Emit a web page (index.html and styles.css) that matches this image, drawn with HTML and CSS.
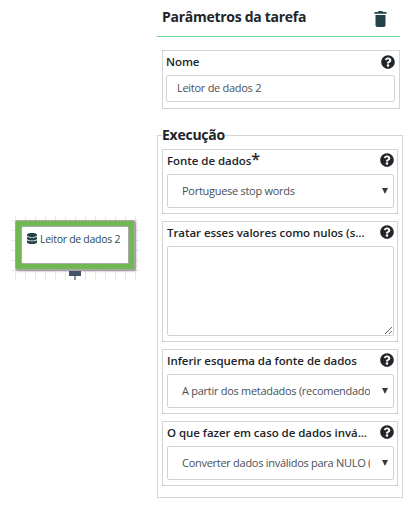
FILE: index.html
```html
<!DOCTYPE html>
<html lang="pt">
<head>
<meta charset="utf-8">
<title>Parâmetros da tarefa</title>
<link rel="stylesheet" href="styles.css">
</head>
<body>
<svg width="0" height="0" class="defs"><defs>
<symbol id="help" viewBox="0 0 512 512"><path fill="currentColor" d="M504 256c0 137-111 248-248 248S8 393 8 256 119 8 256 8s248 111 248 248zM262.700 90c-54.500 0-89.300 23-116.500 63.800-3.500 5.300-2.400 12.400 2.700 16.300l34.700 26.300c5.200 3.900 12.600 3 16.700-2.100 17.900-22.700 30.100-35.800 57.300-35.800 20.400 0 45.700 13.100 45.700 33 0 15-12.400 22.700-32.500 34C247.100 238.500 216 254.900 216 296v4c0 6.600 5.400 12 12 12h56c6.600 0 12-5.400 12-12v-1.300c0-28.500 83.200-29.600 83.200-106.700 0-58-60.200-102-116.500-102zM256 338c-25.400 0-46 20.600-46 46s20.600 46 46 46 46-20.600 46-46-20.600-46-46-46z"/></symbol>
</defs></svg>
<div class="app">
  <div class="canvas">
    <div class="node"><div class="node-body">
      <svg class="db" viewBox="0 0 448 512" preserveAspectRatio="none"><path fill="currentColor" d="M448 73v46c0 40-100 73-224 73S0 159 0 119V73C0 33 100 0 224 0s224 33 224 73zm0 103v103c0 40-100 73-224 73S0 319 0 279V176c48 33 136 48 224 48s176-15 224-48zm0 160v103c0 40-100 73-224 73S0 479 0 439V336c48 33 136 48 224 48s176-15 224-48z"/></svg>
      <span>Leitor de dados 2</span>
    </div></div>
    <div class="port"></div>
  </div>
  <div class="panel">
    <header><h1>Parâmetros da tarefa</h1>
      <svg class="trash" viewBox="0 0 12 16"><path fill="currentColor" d="M0 1h3.500l.7-1h3.600l.7 1H12v1.800H0zM1 4h10v10.300Q11 16 9.300 16H2.700Q1 16 1 14.300z"/></svg>
    </header>
    <div class="group name"><div class="label"><b>Nome</b><svg><use href="#help"/></svg></div><div class="field input">Leitor de dados 2</div></div>
    <fieldset>
      <legend>Execução</legend>
      <div class="group"><div class="label"><b>Fonte de dados<i>*</i></b><svg><use href="#help"/></svg></div><div class="field select"><span>Portuguese stop words</span></div></div>
      <div class="group"><div class="label"><b>Tratar esses valores como nulos (s...</b><svg><use href="#help"/></svg></div><textarea class="field"></textarea></div>
      <div class="group"><div class="label"><b>Inferir esquema da fonte de dados</b><svg><use href="#help"/></svg></div><div class="field select"><span>A partir dos metadados (recomendado</span></div></div>
      <div class="group"><div class="label"><b>O que fazer em caso de dados invá...</b><svg><use href="#help"/></svg></div><div class="field select"><span>Converter dados inválidos para NULO (</span></div></div>
    </fieldset>
  </div>
</div>
</body>
</html>
```
FILE: styles.css
```css
* { box-sizing: border-box; }
body { margin: 0; background: #fff; font: 11px/16px "Open Sans", "Noto Sans", sans-serif; color: #212529; overflow: hidden; }
.defs { position: absolute; }
.app { display: flex; height: 508px; }
.canvas { width: 128px; height: 64px; margin: 216px 18px 0 11px; padding: 4px 4px 0;
  background-image: linear-gradient(90deg, #e8e8e8 1px, transparent 1px), linear-gradient(#e8e8e8 1px, transparent 1px);
  background-size: 10px 10px; background-position: 4px 4px; }
.node { width: 120px; height: 50px; padding: 6px; background: #71b852; border: 1px solid #aaa; border-radius: 2px; box-shadow: 1px 1px 2px #888; }
.node-body { display: flex; height: 38px; margin: -1px 0 0 -1px; width: 108px; padding: 4px 0 0 5px; gap: 3px; background: #fff; border: 1px solid #aaa; border-radius: 2px; color: #2b4b52; font-size: 10.500px; letter-spacing: -0.28px; white-space: nowrap; }
.db { width: 10px; height: 11px; margin-top: 2px; color: #23424a; }
.port { width: 12px; height: 5px; margin: 1px 0 0 54px; background: #445468; }
.port::after { content: ""; display: block; width: 2px; height: 4px; margin-left: 5px; transform: translateY(5px); background: #8c94a3; }
.panel { width: 246px; }
header { display: flex; justify-content: space-between; width: 243px; height: 37px; padding: 7px 13px 0 5px; border-bottom: 1px solid #6fd9a0; }
h1 { margin: 0; font-size: 14px; line-height: 20px; font-weight: 700; letter-spacing: -0.28px; }
.trash { width: 13px; height: 16px; margin-top: 4px; color: #23424a; }
.group { border: 1px solid #d4d4d4; padding: 3px 4px 6px; }
.name { width: 238px; height: 59px; margin: 13px 0 0 5px; padding-left: 3px; }
.label { display: flex; justify-content: space-between; height: 21px; }
.label b { white-space: nowrap; font-size: 11.500px; font-weight: 600; line-height: 15px; letter-spacing: -0.05px; }
.label i { font-style: normal; font-size: 16px; line-height: 10px; }
.label svg { width: 14px; height: 14px; margin: 0; }
.name .label svg { margin-top: 1px; }
.field { display: block; width: 100%; border: 1px solid #ced4da; border-radius: 2px; background: #fff; color: #495057; letter-spacing: -0.28px; }
.input { height: 27px; padding: 4px 10px; }
.select { display: flex; align-items: center; height: 34px; padding: 0 5px 1px 14px; }
.select span { width: 188px; overflow: hidden; white-space: nowrap; }
.select::after { content: ""; margin: 0 0 0 auto; border: 2.500px solid transparent; border-width: 6px 3px 0; border-top-color: #343a40; }
fieldset { min-width: 0; height: 373px; margin: 16px 0 0; padding: 0 4px; border: 1px solid #d4d4d4; }
legend { height: 20px; padding: 0; font-size: 14px; font-weight: 700; line-height: 19px; letter-spacing: -0.25px; }
fieldset .group { height: 65px; margin-bottom: 7px; padding-right: 3px; }
fieldset .group:first-of-type { margin-top: 4px; }
fieldset .group:nth-of-type(2) { height: 121px; }
textarea { height: 90px; resize: vertical; }
```
